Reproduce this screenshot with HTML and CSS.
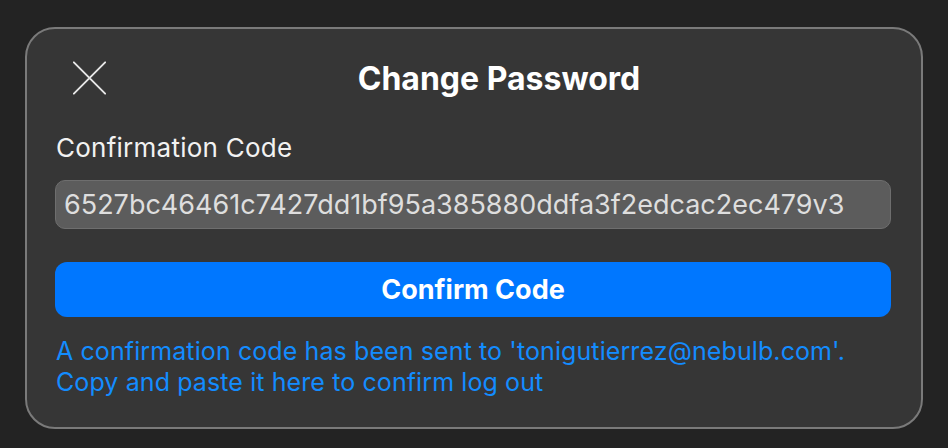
FILE: index.html
```html
<!DOCTYPE html>
<html lang="en">
<head>
  <meta charset="UTF-8">
  <meta name="viewport" content="width=device-width, initial-scale=1.0">
  <title>Change Password</title>
  <link rel="stylesheet" href="styles.css">
</head>
<body>
  <!-- Change password dialog -->
  <div class="dialog">
    <div class="dialog-header">
      <button class="close-btn" aria-label="Close">
        <svg width="38" height="38" viewBox="0 0 38 38">
          <path d="M1 1 L37 37 M37 1 L1 37" stroke="#e6e6e6" stroke-width="2.2" stroke-linecap="round" fill="none"/>
        </svg>
      </button>
      <h1>Change Password</h1>
    </div>

    <label class="field-label" for="code-input">Confirmation Code</label>
    <input type="text" id="code-input" class="code-input" value="6527bc46461c7427dd1bf95a385880ddfa3f2edcac2ec479v3">

    <button class="confirm-btn">Confirm Code</button>

    <p class="hint">A confirmation code has been sent to 'tonigutierrez@nebulb.com'.<br>Copy and paste it here to confirm log out</p>
  </div>
</body>
</html>
```

FILE: styles.css
```css
/* Reset styles */
* {
  margin: 0;
  padding: 0;
  box-sizing: border-box;
}

body {
  font-family: Inter, "Noto Sans", Arial, sans-serif;
  background-color: #232323;
  color: #f2f2f2;
  padding: 27px 25px;
  min-height: 100vh;
}

.dialog {
  width: 898px;
  height: 402px;
  background-color: #363636;
  border: 2px solid #7a7a7a;
  border-radius: 30px;
  padding: 24px 29px 0 29px;
  display: flex;
  flex-direction: column;
}

.dialog-header {
  display: flex;
  align-items: center;
  height: 50px;
}

.close-btn {
  width: 50px;
  height: 50px;
  background: none;
  border: none;
  display: flex;
  align-items: center;
  padding-left: 17px;
  cursor: pointer;
}

.dialog-header h1 {
  flex: 1;
  text-align: center;
  font-size: 32px;
  font-weight: 700;
  color: #ffffff;
}

.field-label {
  margin-top: 30px;
  font-size: 26px;
  line-height: 30px;
  letter-spacing: 0.25px;
  color: #f2f2f2;
}

.code-input {
  margin-top: 17px;
  height: 49px;
  width: 100%;
  margin-left: -1px;
  padding: 0 8px;
  background-color: #5c5c5c;
  border: 1px solid #6e6e6e;
  border-radius: 10px;
  color: #dedede;
  font-family: inherit;
  font-size: 27px;
  outline: none;
}

.confirm-btn {
  margin-top: 33px;
  height: 55px;
  width: 100%;
  margin-left: -1px;
  background-color: #0077ff;
  color: #ffffff;
  border: none;
  border-radius: 12px;
  font-family: inherit;
  font-size: 27px;
  font-weight: 700;
  cursor: pointer;
}

.hint {
  margin-top: 19px;
  font-size: 25px;
  line-height: 31px;
  letter-spacing: 0.1px;
  color: #138cff;
}
```
